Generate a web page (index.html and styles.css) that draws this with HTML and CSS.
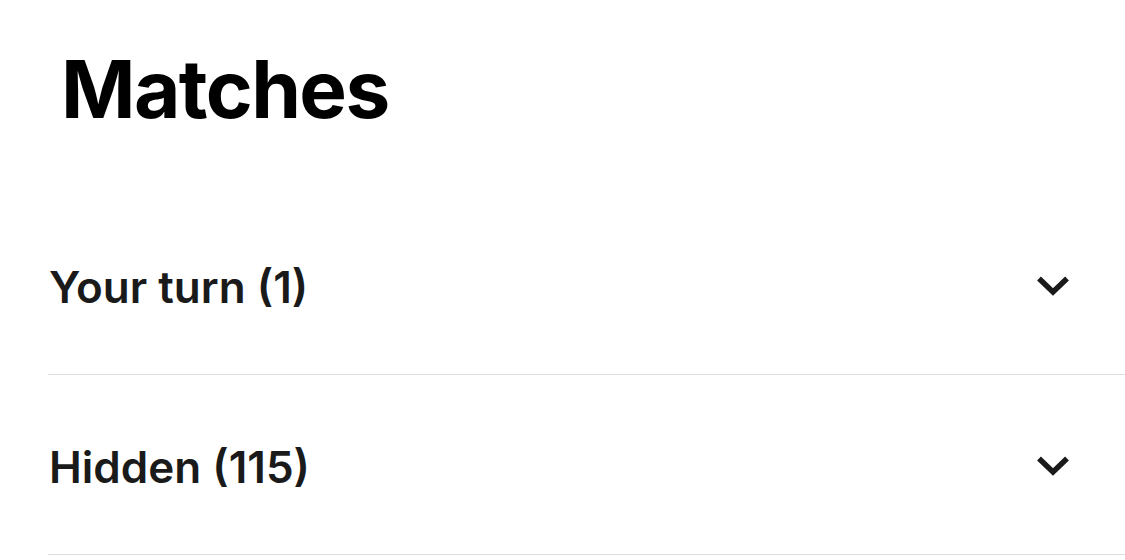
FILE: index.html
```html
<!DOCTYPE html>
<html>
<head>
<meta charset="utf-8">
<link rel="stylesheet" href="styles.css">
</head>
<body>
<div class="page">
  <h1 class="title">Matches</h1>
  <div class="list">
    <div class="row">
      <span class="label">Your turn (1)</span>
      <svg class="chev" width="34" height="22" viewBox="0 0 34 22"><path d="M3 3.5 L17 17 L31 3.5" fill="none" stroke="#1a1a1a" stroke-width="5.5" stroke-linejoin="miter"/></svg>
    </div>
    <div class="row">
      <span class="label">Hidden (115)</span>
      <svg class="chev" width="34" height="22" viewBox="0 0 34 22"><path d="M3 3.5 L17 17 L31 3.5" fill="none" stroke="#1a1a1a" stroke-width="5.5" stroke-linejoin="miter"/></svg>
    </div>
  </div>
</div>
</body>
</html>
```
FILE: styles.css
```css
html, body { margin: 0; padding: 0; background: #fff; }
body { font-family: Inter, "Noto Sans", sans-serif; }
.page { width: 1125px; height: 560px; overflow: hidden; }
.title {
  margin: 0;
  padding: 39px 0 0 61px;
  height: 158px;
  box-sizing: border-box;
  font-size: 80px;
  font-weight: 700;
  line-height: 100px;
  color: #000;
  letter-spacing: -1.6px;
}
.list { margin-left: 48px; padding-top: 37px; }
.row {
  height: 179px;
  border-bottom: 1px solid #dedede;
  display: flex;
  align-items: center;
  justify-content: space-between;
  padding-right: 55px;
}
.label {
  font-size: 44px;
  font-weight: 600;
  color: #1a1a1a;
  margin-left: 1px;
  margin-top: 4px;
}
.chev { display: block; margin-top: 2px; }
```
